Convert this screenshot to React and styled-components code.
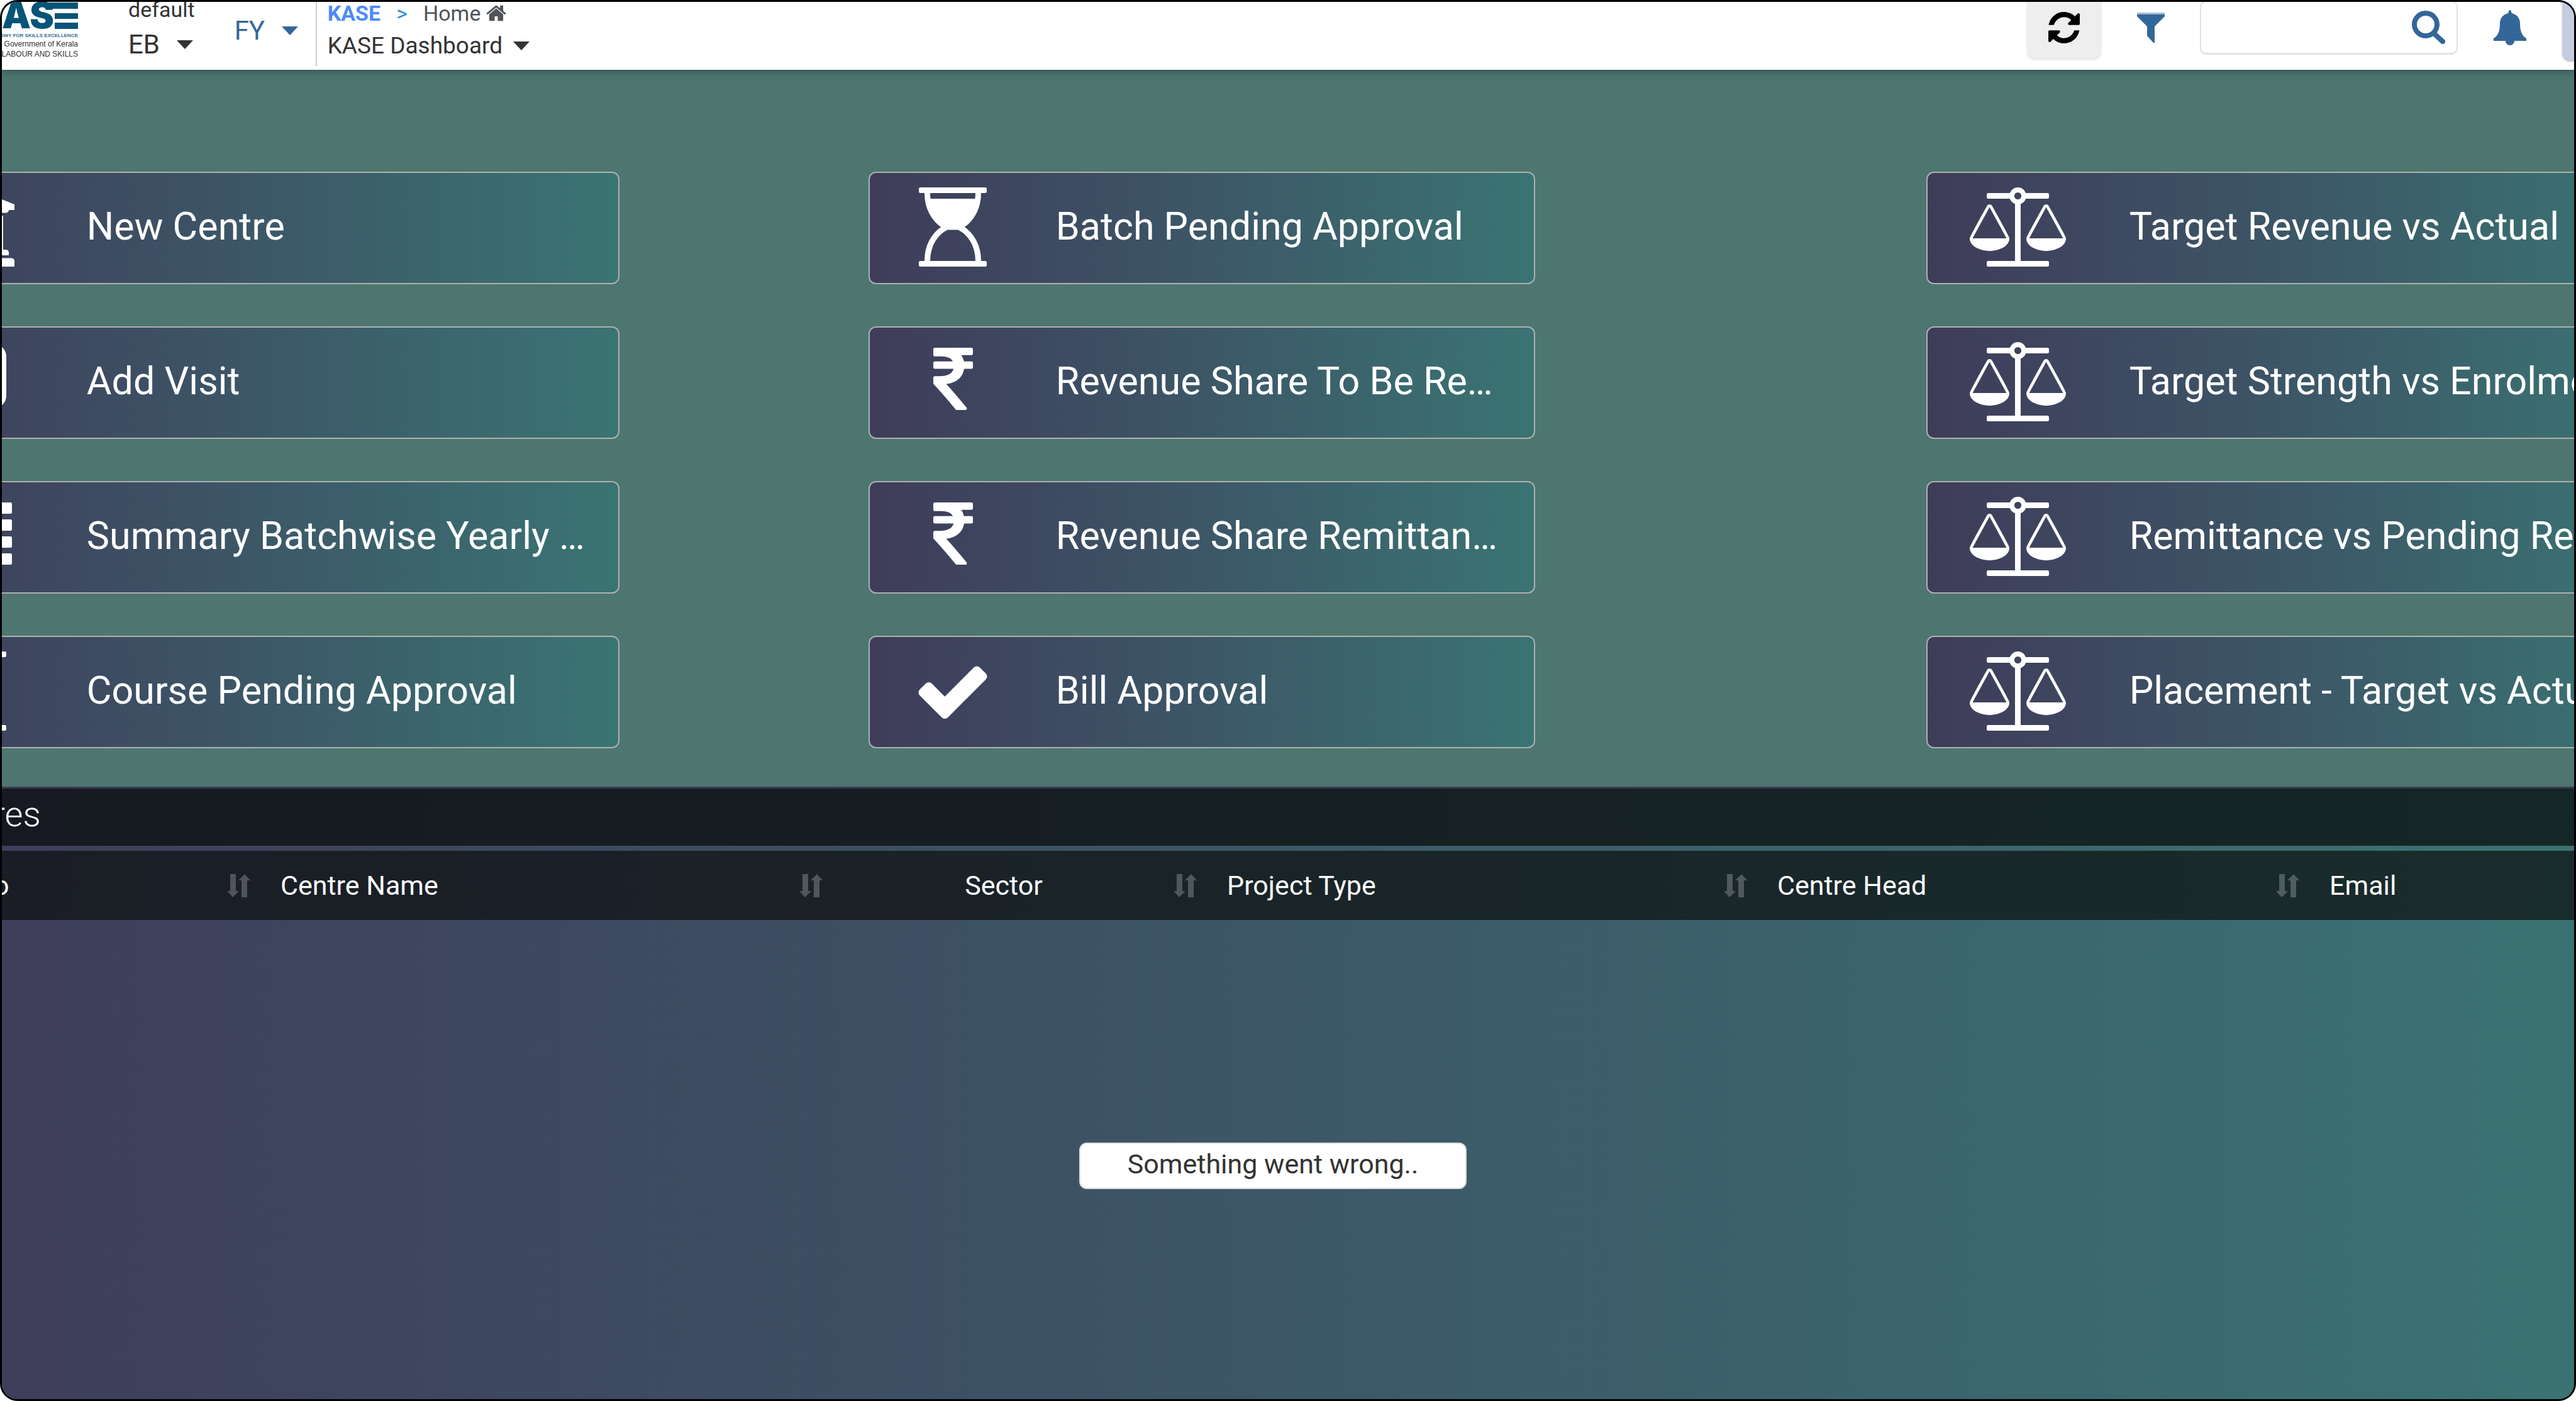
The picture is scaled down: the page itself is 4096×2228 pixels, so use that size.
import React from "react";
import styled, { createGlobalStyle } from "styled-components";

const GlobalStyle = createGlobalStyle`
  *, *::before, *::after { box-sizing: border-box; }
  body { margin: 0; background: #fff; font-family: Roboto, "Liberation Sans", sans-serif; }
  button, select, input { font: inherit; color: inherit; margin: 0; padding: 0; border: 0; background: none; }
`;

const fade = "linear-gradient(90deg, #3f3c5a, #3d5164 40%, #3a7473)";
const blue = "#336699";

const Frame = styled.div`
  display: flex;
  flex-direction: column;
  min-height: 100vh;
  overflow: hidden;
  border: 3px solid #000;
  border-radius: 28px;
  background: #4d7670;
`;

/* ---------- top bar ---------- */

const TopBar = styled.header`
  position: relative;
  display: flex;
  align-items: flex-start;
  height: 108px;
  background: #fff;
  box-shadow: 0 3px 12px rgba(0, 0, 0, 0.3);
  color: #333;
`;

const LogoLink = styled.a`
  display: block;
  width: 121px;
  height: 90px;
  margin-right: 80px;
`;

const Unit = styled.div`
  display: flex;
  flex-direction: column;
  gap: 20px;
  margin-right: 63px;
`;

const UnitLabel = styled.label`
  font-size: 34px;
  line-height: 24px;
`;

const Picker = styled.div`
  display: flex;
  align-items: center;
  gap: ${(p) => p.$gap || 26}px;
  margin-top: ${(p) => p.$top || 0}px;
  color: ${(p) => p.$color || "#333"};
`;

const PickerSelect = styled.select`
  appearance: none;
  height: 48px;
  line-height: 48px;
  font-size: ${(p) => p.$size || 42}px;
  cursor: pointer;
`;

const CaretIcon = styled.svg`
  width: 26px;
  height: 14px;
  fill: currentColor;
  pointer-events: none;
`;

const Trail = styled.div`
  display: flex;
  flex-direction: column;
  gap: 10px;
  height: 102px;
  margin-left: 28px;
  padding-left: 17px;
  border-left: 2px solid #ccc;
`;

const Crumbs = styled.nav`
  display: flex;
  align-items: center;
  font-size: 34px;
  line-height: 36px;
`;

const Crumb = styled.a`
  display: flex;
  align-items: center;
  gap: 9px;
  color: ${(p) => (p.$root ? "#4d8cf5" : "#505458")};
  font-weight: ${(p) => (p.$root ? 700 : 400)};
  text-decoration: none;
`;

const CrumbMark = styled.span`
  margin: 0 25px;
  color: #2f8be0;
`;

const HomeIcon = styled.svg`
  width: 32px;
  height: 32px;
  fill: currentColor;
`;

const Tools = styled.div`
  display: flex;
  align-items: center;
  gap: 56px;
  height: 82px;
  margin-left: auto;
  margin-right: -73px;
  color: ${blue};
`;

const ToolButton = styled.button`
  display: flex;
  align-items: center;
  justify-content: center;
  cursor: pointer;
`;

const RefreshButton = styled(ToolButton)`
  width: 120px;
  height: 104px;
  border-radius: 14px;
  background: #eee;
  color: #000;
`;

const AvatarButton = styled(ToolButton)`
  width: 92px;
  height: 104px;
  border-radius: 12px;
  background: #c5cce0;
  box-shadow: 0 2px 3px rgba(0, 0, 0, 0.25);
`;

const ToolIcon = styled.svg`
  display: block;
  width: ${(p) => p.$w}px;
  height: ${(p) => p.$h}px;
  fill: currentColor;
`;

const SearchBox = styled.form`
  display: flex;
  align-items: center;
  width: 410px;
  height: 86px;
  padding-right: 18px;
  border: 2px solid #e2e2e2;
  border-bottom-width: 3px;
  border-radius: 10px;
  background: #fff;
`;

const SearchInput = styled.input`
  flex: 1;
  min-width: 0;
  height: 100%;
  padding: 0 20px;
  font-size: 42px;
  outline: none;
`;

/* ---------- shortcut cards ---------- */

const Canvas = styled.main`
  display: flex;
  flex-direction: column;
  flex: 1;
  margin: 0 -120px 0 -196px;
`;

const Board = styled.section`
  display: grid;
  grid-template-columns: 1178fr 396fr 1059fr 622fr 1150fr;
  padding: 162px 0 61px;
`;

const CardColumn = styled.div`
  grid-column: ${(p) => p.$track};
  display: flex;
  flex-direction: column;
  gap: 67px;
  min-width: 0;
`;

const Card = styled.button`
  display: flex;
  align-items: center;
  width: 100%;
  height: 179px;
  border: 2px solid #b0b0b0;
  border-radius: 12px;
  background: ${fade};
  color: #fff;
  text-align: left;
  cursor: pointer;
`;

const CardIcon = styled.span`
  display: flex;
  justify-content: center;
  flex: 0 0 25%;
  padding-bottom: 3px;
`;

const Glyph = styled.svg`
  display: block;
  flex: none;
  height: 126px;
  fill: currentColor;
`;

const CardLabel = styled.span`
  flex: 1;
  min-width: 0;
  margin: 0 4% 6px 3%;
  overflow: hidden;
  font-size: 61px;
  line-height: 80px;
  text-overflow: ellipsis;
  white-space: nowrap;
`;

/* ---------- centres table ---------- */

const Panel = styled.section`
  display: flex;
  flex-direction: column;
  flex: 1;
  overflow: hidden;
  border-top: 3px solid #3d3a56;
  background: ${fade};
  color: #fff;
`;

const PanelTitle = styled.h2`
  margin: 0 0 8px;
  padding: 0 68px 8px;
  background: rgba(9, 13, 14, 0.75);
  font-size: 56px;
  font-weight: 300;
  line-height: 83px;
`;

const CentreTable = styled.table`
  width: 108%;
  table-layout: fixed;
  border-collapse: collapse;
  background: rgba(12, 16, 17, 0.72);
`;

const HeadCell = styled.th`
  height: 110px;
  padding: 0 24px;
  font-size: 43px;
  font-weight: 400;
  text-align: left;

  &:first-child { padding-left: 16px; }
`;

const HeadButton = styled.button`
  display: flex;
  align-items: center;
  width: 100%;
  cursor: pointer;
`;

const HeadText = styled.span`
  flex: 1;
  margin-left: ${(p) => (p.$centered ? -30 : 0)}px;
  text-align: ${(p) => (p.$centered ? "center" : "left")};
`;

const SortIcon = styled.svg`
  width: 37px;
  height: 37px;
  fill: rgba(255, 255, 255, 0.24);
`;

const StatusArea = styled.div`
  display: flex;
  flex: 1;
  align-items: center;
  justify-content: center;
  padding: 20px 0 0 28px;
`;

const StatusMessage = styled.div`
  padding: 0 75px 6px;
  border: 2px solid #ddd;
  border-radius: 12px;
  background: #fff;
  color: #333;
  font-size: 43px;
  line-height: 64px;
`;

/* ---------- drawings ---------- */

const listRows = [128, 512, 896, 1280];

const glyphs = {
  bank: {
    w: 1920,
    art: <path d="M960 0l960 384v128h-128q0 26-20.5 45t-48.5 19h-1526q-28 0-48.5-19t-20.5-45h-128v-128zm-704 640h256v768h128v-768h256v768h128v-768h256v768h128v-768h256v768h59q28 0 48.5 19t20.5 45v64h-1664v-64q0-26 20.5-45t48.5-19h59v-768zm1595 960q28 0 48.5 19t20.5 45v128h-1920v-128q0-26 20.5-45t48.5-19h1782z" />,
  },
  add: {
    w: 1536,
    art: (
      <>
        <rect x="64" y="114" width="1408" height="1312" rx="210" fill="none" stroke="currentColor" strokeWidth="128" />
        <path d="M704 448h128v256h256v128h-256v256h-128v-256h-256v-128h256z" />
      </>
    ),
  },
  list: {
    w: 1792,
    art: listRows.map((y) => (
      <React.Fragment key={y}>
        <rect x="0" y={y} width="256" height="256" rx="32" />
        <rect x="384" y={y} width="1408" height="256" rx="32" />
      </React.Fragment>
    )),
  },
  hourglass: {
    w: 1536,
    art: <path d="M1408 128q0 261-106.500 461.500t-266.500 306.500q160 106 266.500 306.500t106.500 461.500h96q14 0 23 9t9 23v64q0 14-9 23t-23 9h-1472q-14 0-23-9t-9-23v-64q0-14 9-23t23-9h96q0-261 106.500-461.500t266.500-306.500q-160-106-266.500-306.500t-106.500-461.500h-96q-14 0-23-9t-9-23v-64q0-14 9-23t23-9h1472q14 0 23 9t9 23v64q0 14-9 23t-23 9h-96zm-128 0h-1024q0 66 9 128h1006q9-62 9-128zm0 1536q0-130-34-249.500t-90.500-208-126.500-152-146-94.500h-230q-76 31-146 94.500t-126.500 152-90.500 208-34 249.500h1024z" />,
  },
  rupee: {
    w: 898,
    art: <path d="M898 470v102q0 14-9 23t-23 9h-168q-23 144-129 234t-276 110q167 178 459 536 14 16 4 34-8 18-29 18h-195q-16 0-25-12-306-367-498-571-9-9-9-22v-127q0-13 9.500-22.500t22.500-9.500h112q132 0 212.500-43t102.500-125h-427q-14 0-23-9t-9-23v-102q0-14 9-23t23-9h413q-57-113-268-113h-145q-13 0-22.500-9.500t-9.500-22.500v-133q0-14 9-23t23-9h832q14 0 23 9t9 23v102q0 14-9 23t-23 9h-233q47 61 64 144h171q14 0 23 9t9 23z" />,
  },
  check: {
    w: 1792,
    art: <path d="M1671 566q0 40-28 68l-724 724-136 136q-28 28-68 28t-68-28l-136-136-362-362q-28-28-28-68t28-68l136-136q28-28 68-28t68 28l294 295 656-657q28-28 68-28t68 28l136 136q28 28 28 68z" />,
  },
  scales: {
    w: 2176,
    art: <path d="M1728 448l-384 704h768zm-1280 0l-384 704h768zm821-192q-14 40-45.500 71.500t-71.500 45.500v1291h608q14 0 23 9t9 23v64q0 14-9 23t-23 9h-1344q-14 0-23-9t-9-23v-64q0-14 9-23t23-9h608v-1291q-40-14-71.500-45.500t-45.500-71.500h-491q-14 0-23-9t-9-23v-64q0-14 9-23t23-9h491q21-57 70-92.500t111-35.500 111 35.500 70 92.500h491q14 0 23 9t9 23v64q0 14-9 23t-23 9h-491zm-181 16q33 0 56.500-23.500t23.500-56.500-23.500-56.500-56.500-23.500-56.500 23.500-23.500 56.500 23.500 56.500 56.500 23.500zm1088 880q0 73-46.500 131t-117.500 91-144.500 49.500-139.500 16.500-139.500-16.500-144.500-49.500-117.500-91-46.500-131q0-11 35-81t92-174.500 107-195.500 102-184 56-100q18-33 56-33t56 33q4 7 56 100t102 184 107 195.500 92 174.500 35 81zm-1280 0q0 73-46.500 131t-117.500 91-144.500 49.500-139.500 16.500-139.500-16.500-144.500-49.500-117.500-91-46.500-131q0-11 35-81t92-174.500 107-195.500 102-184 56-100q18-33 56-33t56 33q4 7 56 100t102 184 107 195.500 92 174.500 35 81z" />,
  },
};

function Caret() {
  return (
    <CaretIcon viewBox="0 0 26 14" aria-hidden="true">
      <path d="M0 0h26L13 14z" />
    </CaretIcon>
  );
}

function Logo() {
  return (
    <svg width="121" height="90" viewBox="0 0 121 90" role="img" aria-label="KASE">
      <g fill="#065478">
        <text x="83" y="42" textAnchor="end" fontFamily="Inter, sans-serif" fontWeight="900" fontSize="58">KAS</text>
        <rect x="72" y="1" width="49" height="10" />
        <rect x="84" y="18" width="37" height="9" />
        <rect x="84" y="33" width="37" height="10" />
      </g>
      <g fontFamily="Liberation Sans, sans-serif" textAnchor="end">
        <text x="121" y="56" fontSize="8" fontWeight="700" fill="#2f7090">KERALA ACADEMY FOR SKILLS EXCELLENCE</text>
        <text x="121" y="71" fontSize="12" fill="#333">Government of Kerala</text>
        <text x="121" y="87" fontSize="12" fill="#333">DEPARTMENT OF LABOUR AND SKILLS</text>
      </g>
    </svg>
  );
}

/* ---------- content ---------- */

const columns = [
  {
    track: 1,
    cards: [
      ["bank", "New Centre"],
      ["add", "Add Visit"],
      ["list", "Summary Batchwise Yearly …"],
      ["hourglass", "Course Pending Approval"],
    ],
  },
  {
    track: 3,
    cards: [
      ["hourglass", "Batch Pending Approval"],
      ["rupee", "Revenue Share To Be Re…"],
      ["rupee", "Revenue Share Remittan…"],
      ["check", "Bill Approval"],
    ],
  },
  {
    track: 5,
    cards: [
      ["scales", "Target Revenue vs Actual"],
      ["scales", "Target Strength vs Enrolment"],
      ["scales", "Remittance vs Pending Remittance"],
      ["scales", "Placement - Target vs Actual"],
    ],
  },
];

const headings = [
  { text: "Centre No", width: 615 },
  { text: "Centre Name", width: 910 },
  { text: "Sector", width: 595, centered: true },
  { text: "Project Type", width: 875 },
  { text: "Centre Head", width: 878 },
  { text: "Email" },
];

export default function App() {
  return (
    <Frame>
      <GlobalStyle />
      <TopBar>
        <LogoLink href="#kase"><Logo /></LogoLink>
        <Unit>
          <UnitLabel htmlFor="unit">default</UnitLabel>
          <Picker>
            <PickerSelect id="unit"><option>EB</option></PickerSelect>
            <Caret />
          </Picker>
        </Unit>
        <Picker $top={22} $color={blue}>
          <PickerSelect aria-label="Financial year"><option>FY</option></PickerSelect>
          <Caret />
        </Picker>
        <Trail>
          <Crumbs aria-label="Breadcrumb">
            <Crumb $root href="#kase">KASE</Crumb>
            <CrumbMark>&gt;</CrumbMark>
            <Crumb href="#home">
              Home
              <HomeIcon viewBox="64 192 1664 1408" aria-hidden="true">
                <path d="M1472 992v480q0 26-19 45t-45 19h-384v-384h-256v384h-384q-26 0-45-19t-19-45v-480q0-1 .5-3t.5-3l575-474 575 474q1 2 1 6zm223-69l-62 74q-8 9-21 11h-3q-13 0-21-7l-692-577-692 577q-12 8-24 7-13-2-21-11l-62-74q-8-10-7-23.500t11-21.500l719-599q32-26 76-26t76 26l244 204v-195q0-14 9-23t23-9h192q14 0 23 9t9 23v408l219 182q10 8 11 21.500t-7 23.500z" />
              </HomeIcon>
            </Crumb>
          </Crumbs>
          <Picker $gap={16}>
            <PickerSelect $size={37} aria-label="Dashboard"><option>KASE Dashboard</option></PickerSelect>
            <Caret />
          </Picker>
        </Trail>
        <Tools>
          <RefreshButton aria-label="Refresh">
            <ToolIcon $w={50} $h={50} viewBox="0 0 1536 1536">
              <path d="M1511 928q0 5-1 7-64 268-268 434.500t-478 166.500q-146 0-282.500-55t-243.500-157l-129 129q-19 19-45 19t-45-19-19-45v-448q0-26 19-45t45-19h448q26 0 45 19t19 45-19 45l-137 137q71 66 161 102t187 36q134 0 250-65t186-179q11-17 53-117 8-23 30-23h192q13 0 22.500 9.500t9.500 22.500zm25-800v448q0 26-19 45t-45 19h-448q-26 0-45-19t-19-45 19-45l138-138q-148-137-349-137-134 0-250 65t-186 179q-11 17-53 117-8 23-30 23h-199q-13 0-22.500-9.500t-9.500-22.500v-7q65-268 270-434.500t480-166.500q146 0 284 55.500t245 156.500l130-129q19-19 45-19t45 19 19 45z" />
            </ToolIcon>
          </RefreshButton>
          <ToolButton aria-label="Filter">
            <ToolIcon $w={44} $h={48} viewBox="0 0 44 48">
              <path d="M0 0h44v3H0z" opacity="0.45" />
              <path d="M0 3h44v3L28 22v26h-2L16 37V22L0 6z" />
            </ToolIcon>
          </ToolButton>
          <SearchBox role="search">
            <SearchInput type="text" aria-label="Search" />
            <ToolButton type="button" aria-label="Run search">
              <ToolIcon $w={53} $h={53} viewBox="0 0 53 53">
                <circle cx="22" cy="22" r="18" fill="none" stroke="currentColor" strokeWidth="8" />
                <path d="M35 36l14 13" fill="none" stroke="currentColor" strokeWidth="8" strokeLinecap="round" />
              </ToolIcon>
            </ToolButton>
          </SearchBox>
          <ToolButton aria-label="Notifications">
            <ToolIcon $w={54} $h={56} viewBox="0 0 54 56">
              <path d="M27 0c2 0 2 3 3 5 8 2 13 8 13 16 0 11 2 16 6 21l4 3v4H34c0 4-3 7-7 7s-7-3-7-7H1v-4l4-3c4-5 6-10 6-21 0-8 5-14 13-16 1-2 1-5 3-5z" />
            </ToolIcon>
          </ToolButton>
          <AvatarButton aria-label="Account" />
        </Tools>
      </TopBar>

      <Canvas>
        <Board>
          {columns.map((col) => (
            <CardColumn key={col.track} $track={col.track}>
              {col.cards.map(([icon, label]) => (
                <Card key={label}>
                  <CardIcon>
                    <Glyph viewBox={`0 0 ${glyphs[icon].w} 1792`} aria-hidden="true">{glyphs[icon].art}</Glyph>
                  </CardIcon>
                  <CardLabel>{label}</CardLabel>
                </Card>
              ))}
            </CardColumn>
          ))}
        </Board>

        <Panel>
          <PanelTitle>Centres</PanelTitle>
          <CentreTable>
            <colgroup>
              {headings.map((h) => <col key={h.text} width={h.width} />)}
            </colgroup>
            <thead>
              <tr>
                {headings.map((h) => (
                  <HeadCell key={h.text} scope="col">
                    <HeadButton>
                      <HeadText $centered={h.centered}>{h.text}</HeadText>
                      <SortIcon viewBox="0 0 37 37" aria-hidden="true">
                        <path d="M5 0h9v27h5L9 37 0 27h5z" />
                        <path d="M23 37h9V10h5L28 0l-10 10h5z" />
                      </SortIcon>
                    </HeadButton>
                  </HeadCell>
                ))}
              </tr>
            </thead>
          </CentreTable>
          <StatusArea>
            <StatusMessage role="alert">Something went wrong..</StatusMessage>
          </StatusArea>
        </Panel>
      </Canvas>
    </Frame>
  );
}
